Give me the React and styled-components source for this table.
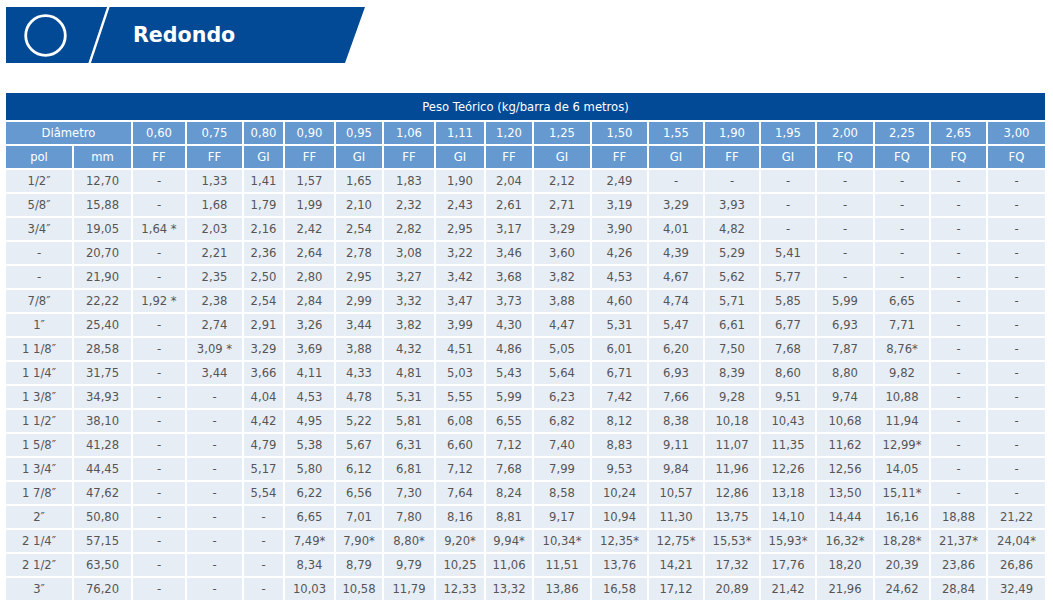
import styled, { createGlobalStyle } from "styled-components";

const GlobalStyle = createGlobalStyle`
  body {
    margin: 0;
    background: #fff;
    font-family: "DejaVu Sans", Verdana, sans-serif;
  }
`;

const Page = styled.div`
  padding: 7px 8px 0 6px;
`;

const Banner = styled.div`
  position: relative;
  width: 359px;
  height: 56px;
  background-color: #034a96;
  clip-path: polygon(0 0, 359px 0, 339px 56px, 0 56px);
  display: flex;
  align-items: center;
`;

const IconBox = styled.div`
  width: 127px;
  display: flex;
  padding-left: 18px;
  box-sizing: border-box;
`;

const Slash = styled.svg`
  position: absolute;
  left: 0;
  top: 0;
`;

const Title = styled.h1`
  margin: 0;
  color: #fff;
  font-size: 20.6px;
  font-weight: bold;
  font-family: "DejaVu Sans", Verdana, sans-serif;
`;

const Grid = styled.div`
  margin-top: 30px;
  display: grid;
  grid-template-columns: 66px 57px 52px 55px 39px 49px 46px 50px 48px 46px 56px 55px 54px 54px 54px 56px 54px 55px 57px;
  gap: 2px;
  font-size: 11.6px;
`;

const Cell = styled.div`
  height: ${(p) => (p.$tall ? "27px" : "22px")};
  grid-column: ${(p) => (p.$span ? `span ${p.$span}` : "auto")};
  display: flex;
  align-items: center;
  justify-content: center;
  white-space: nowrap;
  background-color: ${(p) =>
    p.$kind === "title" ? "#034a96" : p.$kind === "head" ? "#6699cf" : "#e7edf5"};
  color: ${(p) => (p.$kind === "data" ? "#555" : "#fff")};
`;

const sizes = ["0,60", "0,75", "0,80", "0,90", "0,95", "1,06", "1,11", "1,20", "1,25", "1,50", "1,55", "1,90", "1,95", "2,00", "2,25", "2,65", "3,00"];
const types = ["FF", "FF", "GI", "FF", "GI", "FF", "GI", "FF", "GI", "FF", "GI", "FF", "GI", "FQ", "FQ", "FQ", "FQ"];

const rows = [
  "1/2″|12,70|-|1,33|1,41|1,57|1,65|1,83|1,90|2,04|2,12|2,49|-|-|-|-|-|-|-",
  "5/8″|15,88|-|1,68|1,79|1,99|2,10|2,32|2,43|2,61|2,71|3,19|3,29|3,93|-|-|-|-|-",
  "3/4″|19,05|1,64 *|2,03|2,16|2,42|2,54|2,82|2,95|3,17|3,29|3,90|4,01|4,82|-|-|-|-|-",
  "-|20,70|-|2,21|2,36|2,64|2,78|3,08|3,22|3,46|3,60|4,26|4,39|5,29|5,41|-|-|-|-",
  "-|21,90|-|2,35|2,50|2,80|2,95|3,27|3,42|3,68|3,82|4,53|4,67|5,62|5,77|-|-|-|-",
  "7/8″|22,22|1,92 *|2,38|2,54|2,84|2,99|3,32|3,47|3,73|3,88|4,60|4,74|5,71|5,85|5,99|6,65|-|-",
  "1″|25,40|-|2,74|2,91|3,26|3,44|3,82|3,99|4,30|4,47|5,31|5,47|6,61|6,77|6,93|7,71|-|-",
  "1 1/8″|28,58|-|3,09 *|3,29|3,69|3,88|4,32|4,51|4,86|5,05|6,01|6,20|7,50|7,68|7,87|8,76*|-|-",
  "1 1/4″|31,75|-|3,44|3,66|4,11|4,33|4,81|5,03|5,43|5,64|6,71|6,93|8,39|8,60|8,80|9,82|-|-",
  "1 3/8″|34,93|-|-|4,04|4,53|4,78|5,31|5,55|5,99|6,23|7,42|7,66|9,28|9,51|9,74|10,88|-|-",
  "1 1/2″|38,10|-|-|4,42|4,95|5,22|5,81|6,08|6,55|6,82|8,12|8,38|10,18|10,43|10,68|11,94|-|-",
  "1 5/8″|41,28|-|-|4,79|5,38|5,67|6,31|6,60|7,12|7,40|8,83|9,11|11,07|11,35|11,62|12,99*|-|-",
  "1 3/4″|44,45|-|-|5,17|5,80|6,12|6,81|7,12|7,68|7,99|9,53|9,84|11,96|12,26|12,56|14,05|-|-",
  "1 7/8″|47,62|-|-|5,54|6,22|6,56|7,30|7,64|8,24|8,58|10,24|10,57|12,86|13,18|13,50|15,11*|-|-",
  "2″|50,80|-|-|-|6,65|7,01|7,80|8,16|8,81|9,17|10,94|11,30|13,75|14,10|14,44|16,16|18,88|21,22",
  "2 1/4″|57,15|-|-|-|7,49*|7,90*|8,80*|9,20*|9,94*|10,34*|12,35*|12,75*|15,53*|15,93*|16,32*|18,28*|21,37*|24,04*",
  "2 1/2″|63,50|-|-|-|8,34|8,79|9,79|10,25|11,06|11,51|13,76|14,21|17,32|17,76|18,20|20,39|23,86|26,86",
  "3″|76,20|-|-|-|10,03|10,58|11,79|12,33|13,32|13,86|16,58|17,12|20,89|21,42|21,96|24,62|28,84|32,49",
].map((r) => r.split("|"));

export default function App() {
  return (
    <Page>
      <GlobalStyle />
      <Banner>
        <Slash width="359" height="56">
          <line x1="103" y1="-2" x2="83" y2="58" stroke="#fff" strokeWidth="2.4" />
        </Slash>
        <IconBox>
          <svg width="43" height="43" viewBox="0 0 43 43">
            <circle cx="21.5" cy="21.5" r="19.8" fill="none" stroke="#fff" strokeWidth="2.8" />
          </svg>
        </IconBox>
        <Title>Redondo</Title>
      </Banner>
      <Grid>
        <Cell $kind="title" $span={19} $tall>
          Peso Teórico (kg/barra de 6 metros)
        </Cell>
        <Cell $kind="head" $span={2}>Diâmetro</Cell>
        {sizes.map((s) => (
          <Cell key={s} $kind="head">{s}</Cell>
        ))}
        <Cell $kind="head">pol</Cell>
        <Cell $kind="head">mm</Cell>
        {types.map((t, i) => (
          <Cell key={i} $kind="head">{t}</Cell>
        ))}
        {rows.map((row, r) =>
          row.map((v, c) => (
            <Cell key={`${r}-${c}`} $kind="data">{v}</Cell>
          ))
        )}
      </Grid>
    </Page>
  );
}
